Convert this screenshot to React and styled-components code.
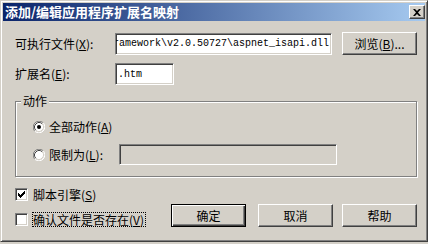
import React from 'react'
import styled, { createGlobalStyle, css } from 'styled-components'

const GlobalStyle = createGlobalStyle`
  html, body {
    margin: 0;
    background: #d4d0c8;
  }
  body {
    font-family: "Noto Sans CJK SC", "Noto Sans", sans-serif;
    font-size: 12px;
    color: #000;
  }
`

const raised = css`
  border: 1px solid;
  border-color: #fff #404040 #404040 #fff;
  box-shadow: inset -1px -1px #808080, inset 1px 1px #d4d0c8;
`

const sunken = css`
  border: 1px solid;
  border-color: #808080 #fff #fff #808080;
  box-shadow: inset 1px 1px #404040, inset -1px -1px #d4d0c8;
`

function App() {
  return (
    <>
      <GlobalStyle />
      <Window>
        <TitleBar>
          <Title>添加/编辑应用程序扩展名映射</Title>
          <CloseButton>
            <svg width="8" height="7" viewBox="0 0 8 7">
              <path d="M0 0h2l2 2 2-2h2L5 3.5 8 7H6L4 5 2 7H0l3-3.5z" fill="#000" />
            </svg>
          </CloseButton>
        </TitleBar>

        <Body>
          <Row>
            <Label>可执行文件(<u>X</u>):</Label>
            <Field $width={217}>
              <span>C:\WINDOWS\Microsoft.NET\Framework\v2.0.50727\aspnet_isapi.dll</span>
            </Field>
            <Button $width={75}>浏览(<u>B</u>)...</Button>
          </Row>

          <Row $gap={8}>
            <Label>扩展名(<u>E</u>):</Label>
            <Field $width={59}>
              <span>.htm</span>
            </Field>
          </Row>

          <Group>
            <Legend>动作</Legend>
            <OptionRow>
              <Radio checked />
              <span>全部动作(<u>A</u>)</span>
            </OptionRow>
            <OptionRow $gap={10}>
              <Radio />
              <LimitLabel>限制为(<u>L</u>):</LimitLabel>
              <Field $width={218} $height={21} $disabled />
            </OptionRow>
          </Group>

          <Footer>
            <Checks>
              <CheckRow>
                <Checkbox checked />
                <CheckLabel>脚本引擎(<u>S</u>)</CheckLabel>
              </CheckRow>
              <CheckRow>
                <Checkbox />
                <CheckLabel $focused>确认文件是否存在(<u>V</u>)</CheckLabel>
              </CheckRow>
            </Checks>
            <Buttons>
              <Button $width={75} $default>确定</Button>
              <Button $width={75}>取消</Button>
              <Button $width={75}>帮助</Button>
            </Buttons>
          </Footer>
        </Body>
      </Window>
    </>
  )
}

function Radio({ checked }) {
  return (
    <RadioBox>
      <svg width="12" height="12" viewBox="0 0 12 12">
        <circle cx="6" cy="6" r="5" fill="#fff" />
        <path d="M1.76 10.24A6 6 0 0 1 10.24 1.76" stroke="#808080" fill="none" strokeWidth="1" transform="translate(0 0)" />
        <path d="M10.24 1.76A6 6 0 0 1 1.76 10.24" stroke="#fff" fill="none" strokeWidth="1" />
        <path d="M2.82 9.18A4.5 4.5 0 0 1 9.18 2.82" stroke="#404040" fill="none" strokeWidth="1" />
        <path d="M9.18 2.82A4.5 4.5 0 0 1 2.82 9.18" stroke="#d4d0c8" fill="none" strokeWidth="1" />
        {checked && <circle cx="6" cy="6" r="2" fill="#000" />}
      </svg>
    </RadioBox>
  )
}

function Checkbox({ checked }) {
  return (
    <CheckBoxFrame>
      {checked && (
        <svg width="7" height="7" viewBox="0 0 7 7">
          <path d="M0 2h1v1h1v1h1V3h1V2h1V1h1V0h1v3H6v1H5v1H4v1H3v1H2V6H1V5H0z" fill="#000" />
        </svg>
      )}
    </CheckBoxFrame>
  )
}

export default App

const Window = styled.div`
  width: 428px;
  height: 242px;
  box-sizing: border-box;
  border: 1px solid;
  border-color: #d4d0c8 #404040 #404040 #d4d0c8;
  box-shadow: inset 1px 1px #fff, inset -1px -1px #808080;
  padding: 2px;
  display: flex;
  flex-direction: column;
  background: #d4d0c8;
`

const TitleBar = styled.div`
  height: 18px;
  display: flex;
  align-items: center;
  justify-content: space-between;
  padding-left: 2px;
  background: linear-gradient(to right, #0a246a, #a6caf0);
`

const Title = styled.div`
  color: #fff;
  font-weight: 700;
  font-size: 13px;
  line-height: 18px;
  white-space: nowrap;
`

const CloseButton = styled.div`
  width: 16px;
  height: 14px;
  box-sizing: border-box;
  background: #d4d0c8;
  ${raised};
  display: flex;
  align-items: center;
  justify-content: center;
`

const Body = styled.div`
  padding: 11px 8px 0 12px;
  display: flex;
  flex-direction: column;
`

const Row = styled.div`
  display: flex;
  align-items: center;
  margin-top: ${p => p.$gap || 0}px;
`

const Label = styled.div`
  width: 100px;
  line-height: 14px;
  white-space: nowrap;
`

const Field = styled.div`
  width: ${p => p.$width}px;
  height: ${p => p.$height || 22}px;
  box-sizing: border-box;
  ${sunken};
  background: ${p => (p.$disabled ? '#d4d0c8' : '#fff')};
  display: flex;
  align-items: center;
  justify-content: flex-end;
  overflow: hidden;
  padding: 0 2px;
  margin-right: 10px;
  font-family: "Liberation Mono", "DejaVu Sans Mono", monospace;
  font-size: 10px;
  white-space: nowrap;

  span {
    flex: none;
  }

  &:has(span:only-child) {
    justify-content: ${p => (p.$width < 100 ? 'flex-start' : 'flex-end')};
  }
`

const Button = styled.div`
  width: ${p => p.$width}px;
  height: 23px;
  box-sizing: border-box;
  display: flex;
  align-items: center;
  justify-content: center;
  line-height: 14px;
  white-space: nowrap;
  ${p =>
    p.$default
      ? css`
          border: 1px solid #000;
          box-shadow: inset 1px 1px #fff, inset -1px -1px #404040, inset -2px -2px #808080;
          margin-right: 3px;
        `
      : raised};
`

const Group = styled.div`
  position: relative;
  margin-top: 16px;
  width: 402px;
  box-sizing: border-box;
  border: 1px solid #808080;
  box-shadow: inset 1px 1px #fff, 1px 1px #fff;
  padding: 17px 0 11px 17px;
  display: flex;
  flex-direction: column;
`

const Legend = styled.span`
  position: absolute;
  top: -8px;
  left: 5px;
  padding: 0 2px;
  background: #d4d0c8;
  line-height: 14px;
`

const OptionRow = styled.div`
  display: flex;
  align-items: center;
  gap: 4px;
  min-height: 15px;
  margin-top: ${p => p.$gap || 0}px;
  line-height: 14px;
`

const RadioBox = styled.span`
  display: flex;
  width: 12px;
  height: 12px;
`

const LimitLabel = styled.span`
  width: 66px;
  white-space: nowrap;
`

const Footer = styled.div`
  margin-top: 10px;
  display: flex;
  align-items: flex-end;
  justify-content: space-between;
`

const Checks = styled.div`
  display: flex;
  flex-direction: column;
  gap: 10px;
`

const CheckRow = styled.div`
  display: flex;
  align-items: center;
  gap: 4px;
  height: 15px;
`

const CheckBoxFrame = styled.span`
  width: 13px;
  height: 13px;
  box-sizing: border-box;
  ${sunken};
  background: #fff;
  display: flex;
  align-items: center;
  justify-content: center;
`

const CheckLabel = styled.span`
  border: 1px dotted ${p => (p.$focused ? '#000' : 'transparent')};
  padding: 0 1px 0 0;
  line-height: 13px;
  white-space: nowrap;
`

const Buttons = styled.div`
  display: flex;
  gap: 9px;
`
